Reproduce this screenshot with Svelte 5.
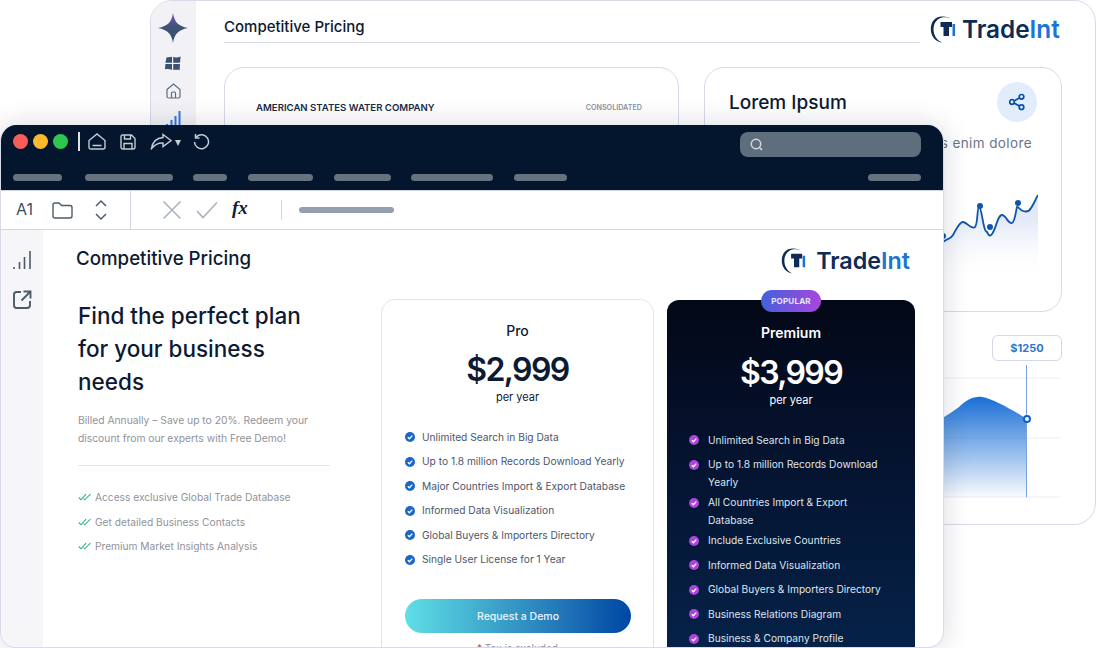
<script>
	const menuPills = [49, 88, 34, 65, 57, 82, 53];
	const proItems = [
		'Unlimited Search in Big Data',
		'Up to 1.8 million Records Download Yearly',
		'Major Countries Import & Export Database',
		'Informed Data Visualization',
		'Global Buyers & Importers Directory',
		'Single User License for 1 Year',
	];
	const premiumItems = [
		{ text: 'Unlimited Search in Big Data' },
		{ text: 'Up to 1.8 million Records Download Yearly', wrap: true },
		{ text: 'All Countries Import & Export Database', wrap: true },
		{ text: 'Include Exclusive Countries' },
		{ text: 'Informed Data Visualization' },
		{ text: 'Global Buyers & Importers Directory' },
		{ text: 'Business Relations Diagram' },
		{ text: 'Business & Company Profile' },
	];
	const perks = [
		'Access exclusive Global Trade Database',
		'Get detailed Business Contacts',
		'Premium Market Insights Analysis',
	];
	const sparkLine =
		'M225 100 C232 96 236 94 239 92 C243 88 246 90 249 85 C252 80 255 72 259 72 C263 72 267 80 271 77 C274 74 273 57 275 57 C278 57 279 82 283 82 C285 86 286 86 287 85 C289 84 290 80 291 78 C293 72 295 65 298 65 C302 65 304 74 308 73 C311 72 312 60 313 57 C315 57 316 60 319 61 C322 62 325 62 327 58 C330 54 332 48 334 45';
</script>

{#snippet logo(cls)}
	<div class="logo {cls}">
		<svg class="mark" viewBox="0 0 26 27">
			<path d="M13 .5 C5 0 .8 6 .8 13 C.8 20 5 25.500 12 26.500 C7 24.500 3.500 19.500 3.500 13 C3.500 6.500 8 1.800 13 1.200 C16 1 18 1.400 20 2.500 C18 1 16 .6 13 .5Z" fill="#0d2b57" />
			<path d="M10.500 6 H22 V11 H19 V20 H13.500 V11 H10.500Z" fill="#0d2b57" />
			<rect x="22.500" y="8" width="2.600" height="12" fill="#1a73d8" />
		</svg>
		<span class="logo-text">Trade<b>Int</b></span>
	</div>
{/snippet}

{#snippet check(color)}
	<svg class="check" viewBox="0 0 10 10">
		<circle cx="5" cy="5" r="5" fill={color} />
		<path d="M2.800 5.200 L4.400 6.800 L7.300 3.600" fill="none" stroke="#fff" stroke-width="1.300" />
	</svg>
{/snippet}

<!-- back window -->
<section class="win back">
	<aside class="back-side">
		<svg width="32" height="32" viewBox="0 0 32 32">
			<defs>
				<linearGradient id="star" x1="0" y1="0" x2="0" y2="1">
					<stop offset="0" stop-color="#7b4fc0" />
					<stop offset="0.45" stop-color="#3f5378" />
					<stop offset="1" stop-color="#34506f" />
				</linearGradient>
			</defs>
			<path d="M16 1 C17.500 10 21 14 31 16 C21 18 17.500 22 16 31 C14.500 22 11 18 1 16 C11 14 14.500 10 16 1Z" fill="url(#star)" />
		</svg>
		<svg class="win-icon" width="16" height="15" viewBox="0 0 16 15">
			<path d="M1.500 1.500 L7 .8 V6.800 H.4Z M8.200 .8 C10.500 1.800 13 1.500 15.600 .4 L15 6.800 H8.200Z M.4 8 H7 V13.800 C4.500 13 2.500 12.800 0 13.200Z M8.200 8 H15 L14.600 14.200 C12.500 13.400 10.500 13.800 8.200 14Z" fill="#3c5272" />
		</svg>
		<svg class="home-icon" width="15" height="16" viewBox="0 0 15 16">
			<path d="M1 6.500 L7.500 1 L14 6.500 V13.500 Q14 15 12.500 15 H2.500 Q1 15 1 13.500Z M5.500 15 V10 Q5.500 9 6.500 9 H8.500 Q9.500 9 9.500 10 V15" fill="none" stroke="#5b6b80" stroke-width="1.200" />
		</svg>
		<svg class="bars-icon" width="16" height="16" viewBox="0 0 16 16">
			<path d="M2 14v2M6.500 10v6M10.500 6v10M14.500 1v15" stroke="#2f78d6" stroke-width="2" />
		</svg>
	</aside>
	<div class="back-main">
		<header class="back-head">
			<h2>Competitive Pricing</h2>
			{@render logo('logo-lg')}
		</header>
		<div class="back-cols">
			<div class="report">
				<span class="report-name">AMERICAN STATES WATER COMPANY</span>
				<span class="report-tag">CONSOLIDATED</span>
			</div>
			<div class="back-right">
				<div class="lorem">
					<div class="lorem-head">
						<h3>Lorem Ipsum</h3>
						<span class="share">
							<svg width="18" height="18" viewBox="0 0 18 18" fill="none" stroke="#0b4ea8" stroke-width="1.700">
								<circle cx="13.500" cy="3.800" r="2.300" />
								<circle cx="4" cy="9" r="2.300" />
								<circle cx="13.500" cy="14.200" r="2.300" />
								<path d="M6 7.900 L11.500 4.900 M6 10.100 L11.500 13.100" />
							</svg>
						</span>
					</div>
					<p>Ut enim ad minim veniam quis enim dolore</p>
					<svg class="spark" width="334" height="130" viewBox="0 0 334 130">
						<defs>
							<linearGradient id="sparkFill" x1="0" y1="0" x2="0" y2="1">
								<stop offset="0.3" stop-color="#e3e9f6" />
								<stop offset="1" stop-color="#fff" stop-opacity="0" />
							</linearGradient>
						</defs>
						<path d="{sparkLine} V130 H225Z" fill="url(#sparkFill)" />
						<path d={sparkLine} fill="none" stroke="#0f55ad" stroke-width="1.800" />
						<circle cx="239" cy="86" r="3" fill="#0f55ad" />
						<circle cx="276" cy="56" r="3" fill="#0f55ad" />
						<circle cx="286" cy="77" r="3" fill="#0f55ad" />
						<circle cx="314" cy="53" r="3" fill="#0f55ad" />
					</svg>
				</div>
				<div class="price-chart">
					<span class="tip">$1250</span>
					<svg width="358" height="163" viewBox="0 0 358 163">
						<defs>
							<linearGradient id="areaFill" x1="0" y1="0" x2="0" y2="1">
								<stop offset="0" stop-color="#1a6fd6" />
								<stop offset="1" stop-color="#1a6fd6" stop-opacity="0.03" />
							</linearGradient>
						</defs>
						<path d="M0 43H357M0 103H357M0 162H357" stroke="#eeeef5" stroke-width="1" />
						<path d="M200 110 C225 90 245 80 255 72 C262 65 270 61 278 62 C290 64 310 76 323 84 V162 H200Z" fill="url(#areaFill)" />
						<path d="M322.500 30 V162" stroke="#76a3e0" stroke-width="1" />
						<circle cx="323" cy="84" r="3" fill="#fff" stroke="#0d5ec9" stroke-width="2" />
					</svg>
				</div>
			</div>
		</div>
	</div>
</section>

<!-- front window -->
<section class="win front">
	<div class="titlebar">
		<div class="title-row">
			<span class="light red"></span>
			<span class="light yellow"></span>
			<span class="light green"></span>
			<span class="sep"></span>
			<svg class="t-home" width="18" height="17" viewBox="0 0 18 17" fill="none" stroke="#c5ccd5" stroke-width="1.400">
				<path d="M1 7.500 L9 1 L17 7.500 V14 Q17 16 15 16 H3 Q1 16 1 14Z M4.500 12.500 H13.500" />
			</svg>
			<svg class="t-save" width="16" height="16" viewBox="0 0 16 16" fill="none" stroke="#c5ccd5" stroke-width="1.400">
				<path d="M2.500 1 H11.500 L15 4.500 V13 Q15 15 13 15 H3 Q1 15 1 13 V2.500 Q1 1 2.500 1Z M4.500 1 V5 H10.500 V1 M4 15 V9.500 H12 V15" />
			</svg>
			<svg class="t-share" width="22" height="17" viewBox="0 0 22 17" fill="none" stroke="#c5ccd5" stroke-width="1.400">
				<path d="M13 1.500 L21 7.500 L13 13.500 V10 C8 9.500 5 11.500 1.500 15.500 C2.500 9 6 5 13 4.500Z" />
			</svg>
			<span class="caret"></span>
			<svg class="t-undo" width="17" height="17" viewBox="0 0 17 17" fill="none" stroke="#c5ccd5" stroke-width="1.500">
				<path d="M3.500 3.800 A7 7 0 1 1 1.500 9 M2.500 1 V5 H6.500" />
			</svg>
			<div class="search">
				<svg width="13" height="13" viewBox="0 0 13 13" fill="none" stroke="#d5dae0" stroke-width="1.500">
					<circle cx="6" cy="6" r="4.700" />
					<path d="M9.500 9.500 L12 12" />
				</svg>
			</div>
		</div>
		<div class="menu-row">
			{#each menuPills as w}
				<span class="pill" style="width:{w}px"></span>
			{/each}
			<span class="pill end"></span>
		</div>
	</div>

	<div class="formula">
		<div class="cell">
			<span class="cell-name">A1</span>
			<svg width="21" height="17" viewBox="0 0 21 17" fill="none" stroke="#4c5a6c" stroke-width="1.400">
				<path d="M1 3 Q1 1 3 1 H7 L9.500 3.500 H18 Q20 3.500 20 5.500 V14 Q20 16 18 16 H3 Q1 16 1 14Z" />
			</svg>
			<svg class="updown" width="14" height="22" viewBox="0 0 14 22" fill="none" stroke="#4c5a6c" stroke-width="1.500">
				<path d="M2 7 L7 2 L12 7 M2 15 L7 20 L12 15" />
			</svg>
		</div>
		<div class="fx-box">
			<svg width="20" height="20" viewBox="0 0 20 20" fill="none" stroke="#aab2be" stroke-width="1.600">
				<path d="M1.500 1.500 L18.500 18.500 M18.500 1.500 L1.500 18.500" />
			</svg>
			<svg class="tick" width="22" height="18" viewBox="0 0 22 18" fill="none" stroke="#aab2be" stroke-width="1.600">
				<path d="M1 10 L7 16.500 L21 1.500" />
			</svg>
			<span class="fx">fx</span>
			<span class="fx-sep"></span>
			<span class="fx-bar"></span>
		</div>
	</div>

	<div class="body">
		<aside class="side">
			<svg width="20" height="19" viewBox="0 0 20 19">
				<path d="M2 17v2M7.500 12v7M12.500 7v12M18 1v18" stroke="#4c5a6c" stroke-width="1.600" />
			</svg>
			<svg width="19" height="19" viewBox="0 0 19 19" fill="none" stroke="#4c5a6c" stroke-width="1.900">
				<path d="M8 2 H3.500 Q1 2 1 4.500 V15 Q1 18 3.500 18 H14 Q17 18 17 15 V11 M10.500 1.500 H17.500 V8.500 M17 2 L8.500 10.500" />
			</svg>
		</aside>
		<div class="content">
			<header class="content-head">
				<h2>Competitive Pricing</h2>
				{@render logo('logo-md')}
			</header>
			<div class="columns">
				<div class="intro">
					<h1>Find the perfect plan for your business needs</h1>
					<p>Billed Annually – Save up to 20%. Redeem your discount from our experts with Free Demo!</p>
					<ul class="perks">
						{#each perks as perk}
							<li>
								<svg width="14" height="8" viewBox="0 0 14 8" fill="none" stroke="#2fb983" stroke-width="1.100">
									<path d="M.8 4.500 L3 6.800 L8 1.200 M5.500 5.500 L6.600 6.800 L12.500 1.200" />
								</svg>
								{perk}
							</li>
						{/each}
					</ul>
				</div>
				<div class="plan pro">
					<h4>Pro</h4>
					<div class="price">$2,999</div>
					<div class="per">per year</div>
					<ul class="items">
						{#each proItems as item}
							<li>{@render check('#1a66c9')}<span>{item}</span></li>
						{/each}
					</ul>
					<div class="demo">Request a Demo</div>
					<div class="tax"><i>*</i> Tax is excluded</div>
				</div>
				<div class="plan premium">
					<span class="badge">POPULAR</span>
					<h4>Premium</h4>
					<div class="price">$3,999</div>
					<div class="per">per year</div>
					<ul class="items">
						{#each premiumItems as item}
							<li class:wrap={item.wrap}>{@render check('#ad45dc')}<span>{item.text}</span></li>
						{/each}
					</ul>
				</div>
			</div>
		</div>
	</div>
</section>

<style>
	:global(body) {
		background: #fff;
		font-family: Inter, "Liberation Sans", sans-serif;
	}

	h1,
	h2,
	h3,
	h4,
	p,
	ul {
		margin: 0;
		padding: 0;
		list-style: none;
	}

	/* the two windows sit on a free canvas */
	.win {
		position: absolute;
		box-sizing: border-box;
		overflow: hidden;
		background: #fff;
		border: 1px solid #d9d9ea;
		display: flex;
	}

	.back {
		left: 150px;
		top: 0;
		width: 946px;
		height: 525px;
		border-radius: 22px;
	}

	.front {
		left: 0;
		top: 125px;
		width: 944px;
		height: 523px;
		border-radius: 16px;
		flex-direction: column;
		box-shadow: 0 0 28px rgba(10, 20, 50, 0.16);
		border-top: 0;
	}

	/* back window */
	.back-side {
		width: 45px;
		flex: none;
		background: #f2f2f6;
		display: flex;
		flex-direction: column;
		align-items: center;
		padding-top: 11px;
		padding-right: 1px;
		box-sizing: border-box;
	}

	.win-icon {
		margin-top: 12px;
	}

	.home-icon {
		margin-top: 12px;
	}

	.bars-icon {
		margin-top: 11px;
	}

	.back-main {
		flex: 1;
		min-width: 0;
		padding: 0 33px 0 28px;
	}

	.back-head {
		display: flex;
		align-items: flex-end;
		height: 42px;
	}

	.back-head h2 {
		flex: 1;
		height: 42px;
		box-sizing: border-box;
		padding-top: 16px;
		font-size: 15px;
		line-height: 20px;
		font-weight: 500;
		color: #0c1a33;
		border-bottom: 1px solid #d9d9ea;
	}

	.logo {
		display: flex;
		align-items: center;
		flex: none;
	}

	.logo-lg {
		width: 130px;
		margin-left: 10px;
		margin-right: 2px;
		align-self: flex-start;
		margin-top: 15px;
		gap: 6px;
	}

	.logo-lg .mark {
		width: 26px;
		height: 27px;
	}

	.logo-lg .logo-text {
		font-size: 24.300px;
	}

	.logo-md {
		gap: 10px;
	}

	.logo-md .mark {
		width: 25px;
		height: 26px;
	}

	.logo-md .logo-text {
		font-size: 23.300px;
	}

	.logo-text {
		font-weight: 600;
		line-height: 27px;
		color: #0d2b57;
	}

	.logo-text b {
		color: #1a73d8;
		font-weight: 600;
	}

	.back-cols {
		display: flex;
		gap: 25px;
		margin-top: 24px;
	}

	.report {
		width: 455px;
		height: 300px;
		flex: none;
		box-sizing: border-box;
		border: 1px solid #d9d9ea;
		border-radius: 20px;
		padding: 33px 36px 0 31px;
		display: flex;
		justify-content: space-between;
		align-items: flex-start;
	}

	.report-name {
		font-size: 9.600px;
		line-height: 14px;
		font-weight: 600;
		color: #1c2b47;
	}

	.report-tag {
		font-size: 7.200px;
		line-height: 14px;
		font-weight: 600;
		color: #8d93a0;
	}

	.back-right {
		width: 358px;
		flex: none;
	}

	.lorem {
		box-sizing: border-box;
		height: 245px;
		border: 1px solid #d9d9ea;
		border-radius: 20px;
		padding: 14px 24px 0;
		overflow: hidden;
	}

	.lorem-head {
		display: flex;
		justify-content: space-between;
		align-items: center;
		height: 40px;
	}

	.lorem h3 {
		font-size: 19px;
		font-weight: 500;
		color: #0c1a33;
	}

	.share {
		width: 40px;
		height: 40px;
		border-radius: 50%;
		background: #e1edfb;
		display: flex;
		align-items: center;
		justify-content: center;
	}

	.lorem p {
		margin-top: 11px;
		font-size: 13.500px;
		line-height: 20px;
		letter-spacing: 0.4px;
		color: #6b7488;
		white-space: nowrap;
		display: flex;
		justify-content: flex-end;
		padding-right: 5px;
	}

	.spark {
		display: block;
		margin-left: -25px;
		margin-top: -3px;
	}

	.price-chart {
		position: relative;
		height: 165px;
		margin-top: 23px;
	}

	.price-chart svg {
		display: block;
	}

	.tip {
		position: absolute;
		right: 0;
		top: 0;
		width: 70px;
		height: 26px;
		box-sizing: border-box;
		background: #fff;
		border: 1px solid #d5d5ec;
		border-radius: 6px;
		font-size: 11px;
		font-weight: 700;
		line-height: 24px;
		text-align: center;
		color: #2a74d3;
	}

	/* front window */
	.titlebar {
		height: 65px;
		flex: none;
		background: #03162e;
		padding: 0 22px 0 12px;
		box-sizing: border-box;
	}

	.title-row {
		display: flex;
		align-items: center;
		height: 33px;
	}

	.light {
		width: 15px;
		height: 15px;
		border-radius: 50%;
		margin-right: 5px;
	}

	.red {
		background: #f95d59;
	}

	.yellow {
		background: #fdb92d;
	}

	.green {
		background: #2dc64e;
	}

	.sep {
		width: 2px;
		height: 19px;
		background: #dfe3e8;
		margin-left: 5px;
	}

	.t-home {
		margin-left: 8px;
	}

	.t-save {
		margin-left: 14px;
	}

	.t-share {
		margin-left: 14px;
	}

	.caret {
		width: 0;
		height: 0;
		margin: 2px 0 0 3px;
		border-left: 3.500px solid transparent;
		border-right: 3.500px solid transparent;
		border-top: 6px solid #c5ccd5;
	}

	.t-undo {
		margin-left: 12px;
	}

	.search {
		margin-left: auto;
		width: 181px;
		height: 25px;
		margin-top: 5px;
		border-radius: 8px;
		background: #5f6e7d;
		display: flex;
		align-items: center;
		padding-left: 10px;
		box-sizing: border-box;
	}

	.menu-row {
		display: flex;
		gap: 20.700px;
		margin-top: 16px;
	}

	.pill {
		height: 7px;
		border-radius: 4px;
		background: #66737f;
	}

	.pill:first-child {
		margin-right: 2px;
	}

	.pill.end {
		width: 53px;
		margin-left: auto;
	}

	.formula {
		height: 40px;
		flex: none;
		display: flex;
		border-top: 1px solid #cfd3e2;
		border-bottom: 1px solid #d5d5e5;
		box-sizing: border-box;
	}

	.cell {
		width: 130px;
		flex: none;
		box-sizing: border-box;
		border-right: 1px solid #d5d5e5;
		display: flex;
		align-items: center;
		padding-left: 15px;
	}

	.cell-name {
		width: 36px;
		font-size: 16px;
		color: #3f4c5e;
		margin-top: -2px;
	}

	.updown {
		margin-left: 21px;
	}

	.fx-box {
		flex: 1;
		display: flex;
		align-items: center;
		padding-left: 31px;
	}

	.tick {
		margin-left: 14px;
	}

	.fx {
		font-family: "Liberation Serif", serif;
		font-style: italic;
		font-weight: 700;
		font-size: 19px;
		color: #14202f;
		margin-left: 14px;
		margin-top: -4px;
	}

	.fx-sep {
		width: 1px;
		height: 20px;
		background: #d5d5e5;
		margin-left: 33px;
	}

	.fx-bar {
		width: 95px;
		height: 6px;
		border-radius: 3px;
		background: #94a0b0;
		margin-left: 17px;
	}

	.body {
		flex: 1;
		display: flex;
		min-height: 0;
	}

	.side {
		width: 42px;
		flex: none;
		background: #f6f6f8;
		display: flex;
		flex-direction: column;
		align-items: center;
		padding-top: 20px;
		gap: 21px;
		box-sizing: border-box;
	}

	.content {
		flex: 1;
		min-width: 0;
		padding: 0 28px 0 33px;
	}

	.content-head {
		display: flex;
		justify-content: space-between;
		align-items: center;
		height: 69px;
		padding-right: 5px;
	}

	.content-head h2 {
		font-size: 18.700px;
		font-weight: 500;
		color: #0c1a33;
		margin-top: -13px;
	}

	.content-head .logo {
		margin-top: -8px;
	}

	.columns {
		display: flex;
		align-items: flex-start;
	}

	.intro {
		width: 252px;
		flex: none;
		margin-left: 2px;
		margin-right: 51px;
	}

	.intro h1 {
		font-size: 22.500px;
		line-height: 33px;
		font-weight: 500;
		color: #0c1a33;
	}

	.intro p {
		margin-top: 13px;
		font-size: 10.300px;
		line-height: 18px;
		color: #8f939b;
		padding-bottom: 18px;
		border-bottom: 1px solid #e2e4ee;
	}

	.perks {
		margin-top: 19px;
	}

	.perks li {
		display: flex;
		align-items: center;
		gap: 3px;
		height: 24.500px;
		font-size: 10.200px;
		color: #8f939b;
	}

	.plan {
		box-sizing: border-box;
		flex: none;
		position: relative;
		text-align: center;
	}

	.pro {
		width: 273px;
		height: 400px;
		border: 1px solid #e3e4ee;
		border-radius: 14px;
		padding-top: 21px;
		margin-right: 13px;
	}

	.premium {
		width: 248px;
		height: 400px;
		margin-top: 1px;
		border-radius: 12px;
		background: linear-gradient(180deg, #030816 0%, #04102a 30%, #06264f 100%);
		padding-top: 23px;
		color: #fff;
	}

	.plan h4 {
		font-size: 14px;
		line-height: 20px;
		font-weight: 500;
		color: #0c1a33;
	}

	.premium h4 {
		font-weight: 600;
		color: #fff;
	}

	.price {
		margin-top: 9px;
		font-size: 32px;
		letter-spacing: -1.600px;
		line-height: 40px;
		font-weight: 600;
		color: #0c1a33;
	}

	.premium .price {
		margin-top: 10px;
		color: #fff;
	}

	.per {
		font-size: 11px;
		line-height: 14px;
		color: #0c1a33;
	}

	.premium .per {
		color: #fff;
	}

	.items {
		text-align: left;
	}

	.pro .items {
		margin: 21px 0 0 23px;
	}

	.premium .items {
		margin: 21px 0 0 22px;
	}

	.items li {
		display: flex;
		box-sizing: border-box;
		height: 24.600px;
		padding-top: 3.500px;
		line-height: 17.500px;
		font-size: 10.200px;
		gap: 8px;
		color: #4d5568;
	}

	.pro .items li {
		gap: 7px;
	}

	.premium .items li {
		color: #dfe4ee;
		gap: 9px;
		width: 205px;
	}

	.premium .items li.wrap {
		height: 38px;
	}

	.check {
		width: 10px;
		height: 10px;
		flex: none;
		margin-top: 3.500px;
	}

	.demo {
		margin: 26px 22px 0 23px;
		height: 34px;
		border-radius: 17px;
		background: linear-gradient(90deg, #5fdfe6 0%, #2f8cc0 55%, #0047a5 100%);
		color: #e8f6fb;
		font-size: 10.500px;
		font-weight: 500;
		line-height: 35px;
	}

	.tax {
		margin-top: 8px;
		font-size: 10px;
		line-height: 14px;
		color: #8f939b;
	}

	.tax i {
		color: #e04848;
		font-style: normal;
	}

	.badge {
		position: absolute;
		left: 94px;
		top: -10px;
		width: 60px;
		height: 22px;
		border-radius: 11px;
		background: linear-gradient(100deg, #3f62dc, #ad45dc);
		color: #e8e8fb;
		font-size: 8px;
		font-weight: 700;
		line-height: 22px;
		letter-spacing: 0.2px;
	}
</style>
